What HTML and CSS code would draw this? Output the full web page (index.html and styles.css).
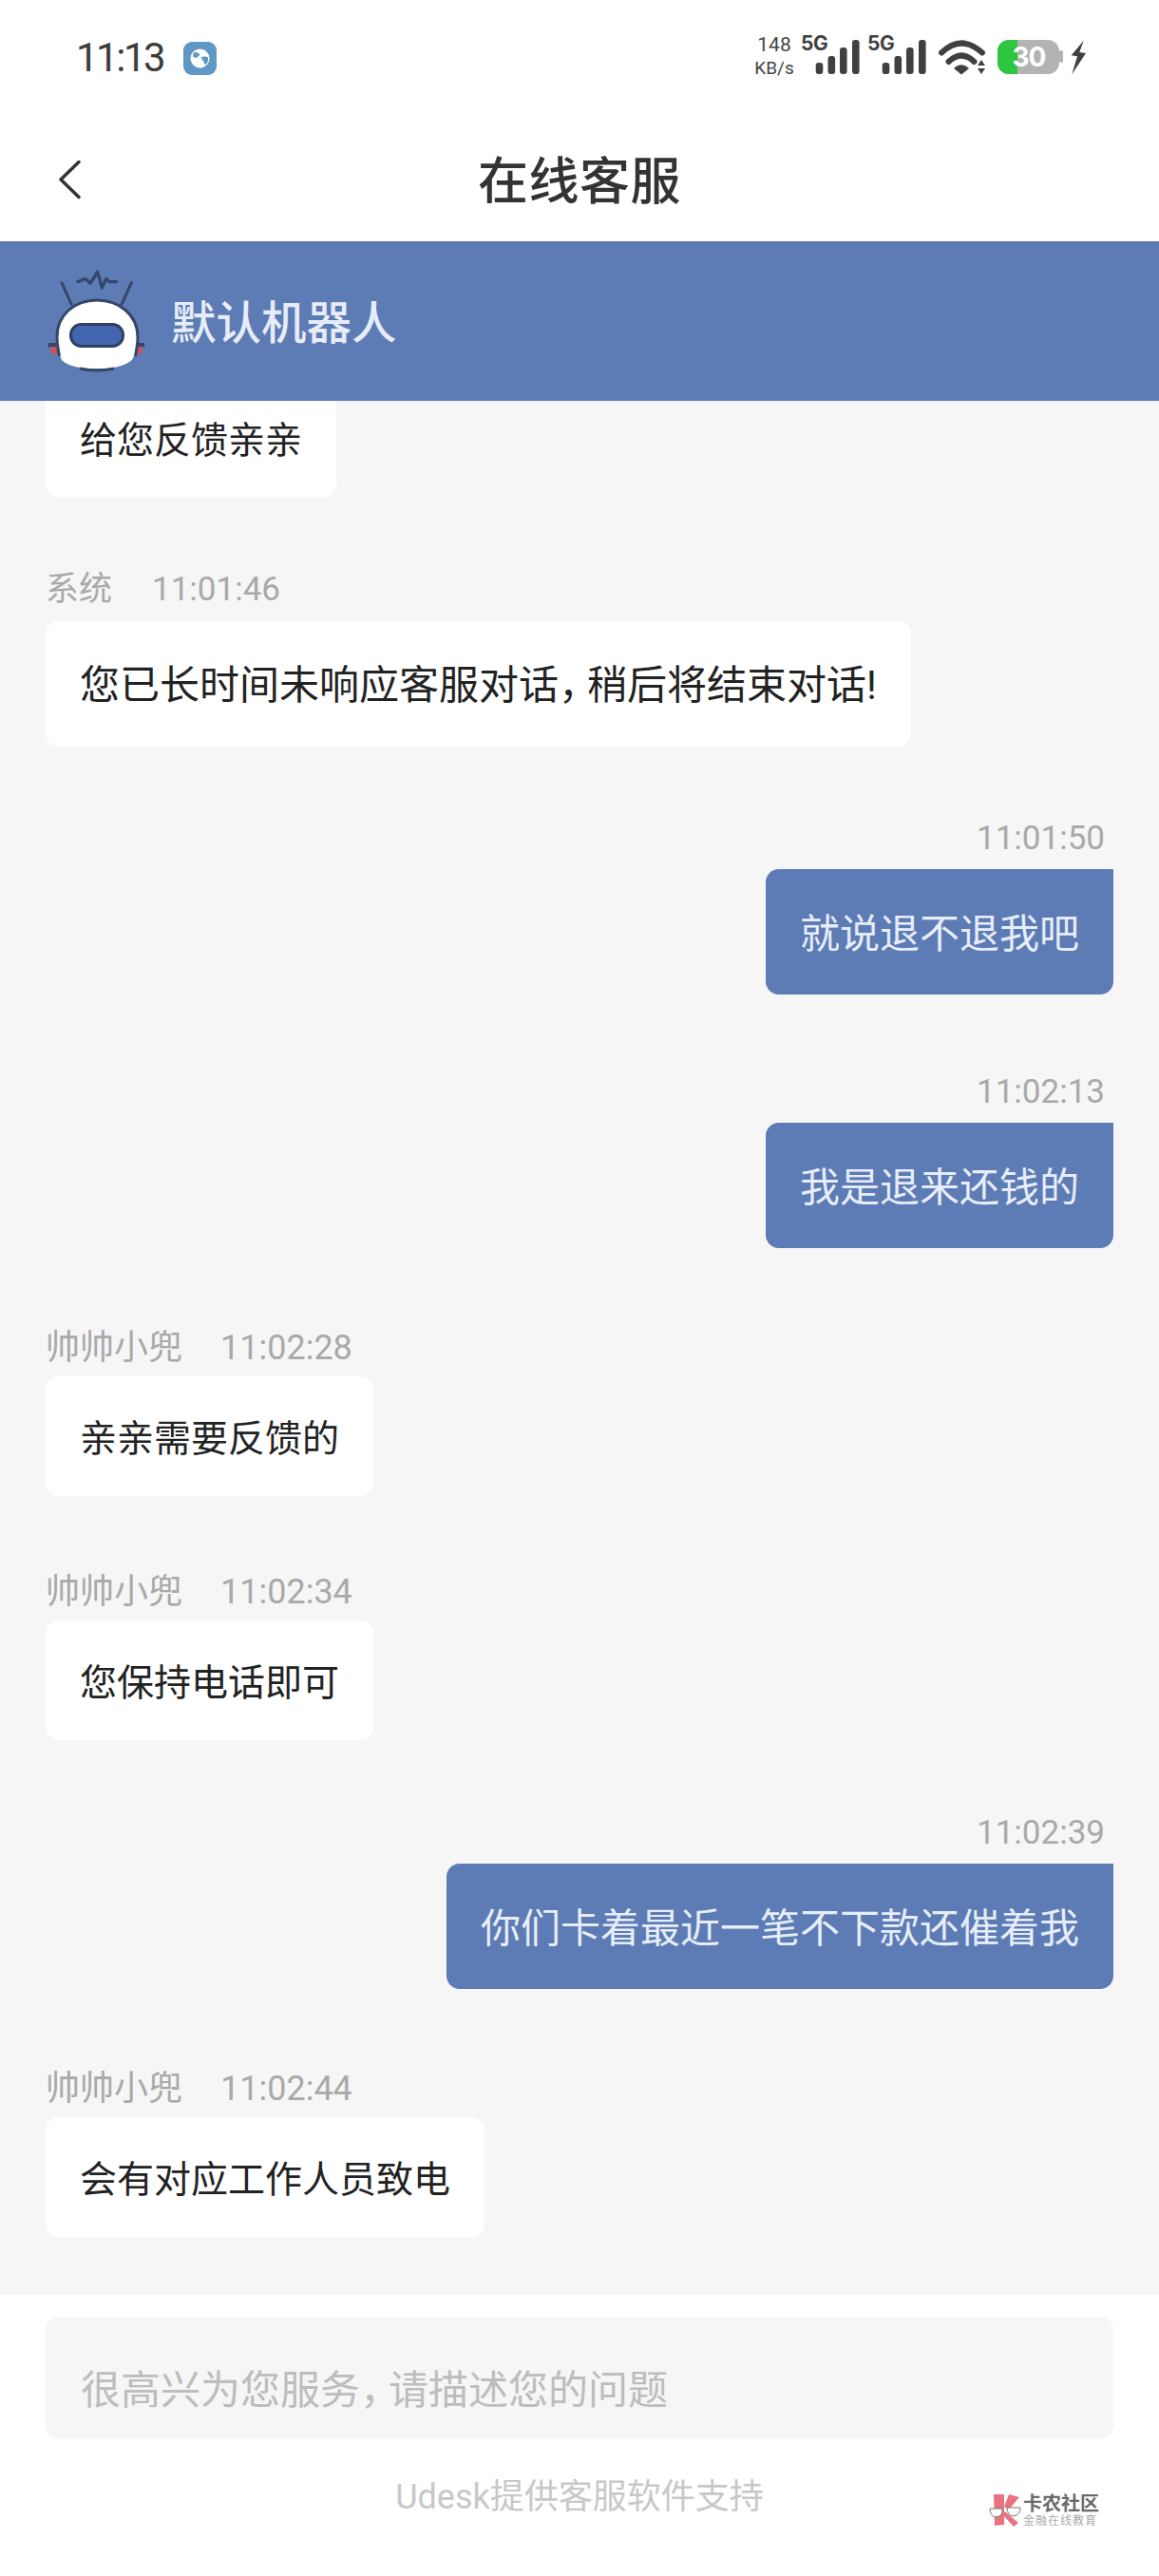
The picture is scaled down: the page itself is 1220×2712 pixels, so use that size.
FILE: index.html
```html
<!DOCTYPE html>
<html lang="zh-CN">
<head>
<meta charset="utf-8">
<title>在线客服</title>
<link rel="stylesheet" href="styles.css">
</head>
<body>
<div class="page">
  <header class="status">
    <div class="status-left">
      <span class="clock">11:13</span>
      <svg class="globe" width="35" height="35" viewBox="0 0 35 35">
        <rect width="35" height="35" rx="9" fill="#6098c4"/>
        <circle cx="17.5" cy="17.5" r="10" fill="#fff"/>
        <path d="M12 10.500c2 1.500 4 .5 5 2.500.5 2-1.500 2-2.500 3.500-1 1-3 0-4.500-1 0-2 .5-3.500 2-5zM19 16c2-1 5-.5 7 .5.500 3-.5 6-3 8-1-1-1-3-2-4.500-1-1-2.500-2.500-2-4z" fill="#6098c4"/>
      </svg>
    </div>
    <div class="status-right">
      <div class="speed"><span class="speed-num">148</span><span class="speed-unit">KB/s</span></div>
      <svg class="sig" width="62" height="50" viewBox="0 -8 62 50">
        <text class="net" x="0" y="15">5G</text>
        <rect x="15.700" y="28" width="7.600" height="12" rx="3"/><rect x="28.500" y="21" width="7.600" height="19" rx="3"/><rect x="41" y="12" width="7.600" height="28" rx="3"/><rect x="54" y="4" width="7.600" height="36" rx="3"/>
      </svg>
      <svg class="sig" width="62" height="50" viewBox="0 -8 62 50">
        <text class="net" x="0" y="15">5G</text>
        <rect x="15.700" y="28" width="7.600" height="12" rx="3"/><rect x="28.500" y="21" width="7.600" height="19" rx="3"/><rect x="41" y="12" width="7.600" height="28" rx="3"/><rect x="54" y="4" width="7.600" height="36" rx="3"/>
      </svg>
      <svg class="wifi" width="49" height="42" viewBox="0 0 49 42">
        <path d="M3 17.500Q24 -2.500 46 17.500M10.500 27Q24 14 37.500 27" fill="none" stroke="#404040" stroke-width="6" stroke-linecap="round"/>
        <path d="M16 34Q24 26.500 32 34L24 40.500Z" fill="#404040"/>
        <path d="M45 25l4 6h-8zM45 40l-4-6h8z" fill="#404040"/>
      </svg>
      <svg class="batt" width="69" height="42" viewBox="0 0 69 42">
        <rect x="0" y="4" width="65" height="36" rx="12" fill="#b3b3b3"/>
        <rect x="65" y="15" width="4" height="13" rx="2" fill="#b3b3b3"/>
        <path d="M12 4H21V40H12A12 12 0 0 1 0 28V16A12 12 0 0 1 12 4Z" fill="#2ec540"/>
        <text class="batt-num" x="33" y="32" text-anchor="middle">30</text>
      </svg>
      <svg class="bolt" width="16" height="42" viewBox="0 0 16 42">
        <path d="M13.700 4.700L.7 20.300 7 21.300 1.300 40.300 16 18 9.300 17Z" fill="#404040"/>
      </svg>
    </div>
  </header>

  <nav class="nav">
    <svg class="back" width="24" height="42" viewBox="0 0 24 42">
      <path d="M22 2.500L3 21l19 18.500" fill="none" stroke="#333" stroke-width="3.500" stroke-linecap="round" stroke-linejoin="round"/>
    </svg>
    <h1 class="title">在线客服</h1>
    <span></span>
  </nav>

  <div class="agent">
    <svg class="robot" width="110" height="110" viewBox="0 0 110 110">
      <path d="M20 14.700L30 37M93.300 14.700L83.300 37" fill="none" stroke="#34476a" stroke-width="3" stroke-linecap="round"/>
      <path d="M36.700 13.700L45 10.300 50 15.300 53.300 10.300 57.700 3 62.300 20 66.700 10.300 70 13.700H77.700" fill="none" stroke="#34476a" stroke-width="3.200" stroke-linecap="round" stroke-linejoin="round"/>
      <path d="M6 78h8v5H6zM107 78h-8v5h8z" fill="#34476a"/>
      <path d="M7 82h8v8H10zM106 82h-8v8h5z" fill="#c9525a"/>
      <path d="M16 72C16 48 34 34 57 34S99 48 99 72C99 82 97 90 94 96 84 104 72 105 57 105S28 104 20 96C17 90 16 82 16 72Z" fill="#fff"/>
      <path d="M17.500 92C16 84 15 78 15 72 15 48 34 33 57 33S100 48 100 72C100 78 99 84 97.500 92" fill="none" stroke="#34476a" stroke-width="3"/>
      <path d="M39 105Q57 109 75 105" fill="none" stroke="#34476a" stroke-width="3"/>
      <rect x="29.500" y="58.500" width="55" height="23" rx="11" fill="#4466b0" stroke="#2e3f60" stroke-width="3"/>
    </svg>
    <span class="agent-name">默认机器人</span>
  </div>

  <main class="chat">
    <section class="msg msg-agent msg-first">
      <p class="bubble bubble-in">给您反馈亲亲</p>
    </section>
    <section class="msg msg-agent">
      <div class="meta"><span class="who">系统</span><time>11:01:46</time></div>
      <p class="bubble bubble-sys">您已长时间未响应客服对话<span class="cm">&#xFF0C;</span>稍后将结束对话!</p>
    </section>
    <section class="msg msg-me gap-s">
      <div class="meta"><time>11:01:50</time></div>
      <p class="bubble bubble-out">就说退不退我吧</p>
    </section>
    <section class="msg msg-me gap-l">
      <div class="meta"><time>11:02:13</time></div>
      <p class="bubble bubble-out">我是退来还钱的</p>
    </section>
    <section class="msg msg-agent gap-l">
      <div class="meta meta-wide"><span class="who">帅帅小兜</span><time>11:02:28</time></div>
      <p class="bubble bubble-in">亲亲需要反馈的</p>
    </section>
    <section class="msg msg-agent gap-m">
      <div class="meta meta-wide"><span class="who">帅帅小兜</span><time>11:02:34</time></div>
      <p class="bubble bubble-in">您保持电话即可</p>
    </section>
    <section class="msg msg-me">
      <div class="meta"><time>11:02:39</time></div>
      <p class="bubble bubble-out">你们卡着最近一笔不下款还催着我</p>
    </section>
    <section class="msg msg-agent gap-l">
      <div class="meta meta-wide"><span class="who">帅帅小兜</span><time>11:02:44</time></div>
      <p class="bubble bubble-in">会有对应工作人员致电</p>
    </section>
  </main>

  <footer class="foot">
    <div class="input">很高兴为您服务<span class="cm">&#xFF0C;</span>请描述您的问题</div>
    <div class="credit">Udesk提供客服软件支持</div>
    <div class="mark">
      <svg width="36" height="38" viewBox="0 0 36 38">
        <path d="M6 2H17V34L7 35ZM22 2L33 5 22 18 17 15ZM18 20L32 32 27 36 15 23Z" fill="#ea7380"/>
        <path d="M2 17H15Q16 25 8.500 26 2 25 2 17ZM20 16H34Q34 24 27 25 20 24 20 16Z" fill="#fff" stroke="#777" stroke-width="1"/>
      </svg>
      <div class="mark-text"><span class="mark-main">卡农社区</span><span class="mark-sub">金融在线教育</span></div>
    </div>
  </footer>
</div>
</body>
</html>
```

FILE: styles.css
```css
* { box-sizing: border-box; }
html, body { margin: 0; padding: 0; }
body {
  width: 1220px;
  height: 2712px;
  overflow: hidden;
  background: #fff;
  font-family: Roboto, "Noto Sans CJK SC", sans-serif;
}
.page { position: relative; display: flex; flex-direction: column; height: 2712px; }

/* status bar */
.status {
  display: flex;
  justify-content: space-between;
  align-items: flex-start;
  height: 90px;
  padding: 38px 77px 0 80px;
}
.status-left { display: flex; align-items: center; height: 46px; gap: 21px; }
.clock { font-size: 42px; line-height: 46px; letter-spacing: -2.500px; color: #3c3c3c; }
.status-right { display: flex; align-items: flex-start; }
.status-right svg { display: block; }
.speed { display: flex; flex-direction: column; align-items: center; width: 42px; margin-right: 7px; color: #444; }
.speed-num { font-size: 21px; line-height: 23px; margin-top: -2px; }
.speed-unit { font-size: 19px; line-height: 22px; margin-top: 2px; }
.sig { fill: #404040; margin: -8px 8px 0 0; }
.sig + .wifi { margin-left: 5px; margin-right: 13px; }
.net { font-size: 21px; font-weight: 700; font-family: Inter, sans-serif; letter-spacing: -.5px; fill: #404040; }
.batt { margin-right: 8px; }
.batt-num { font-size: 28px; font-weight: 700; font-family: Inter, sans-serif; letter-spacing: -1px; fill: #fff; }

/* navigation */
.nav {
  display: grid;
  grid-template-columns: 1fr auto 1fr;
  align-items: center;
  height: 164px;
  padding: 34px 0 0 61px;
}
.title { margin: 0 0 0 -61px; padding-top: 6px; font-size: 53px; line-height: 64px; font-weight: 500; color: #333; letter-spacing: .5px; }

/* agent bar */
.agent {
  display: flex;
  align-items: center;
  height: 168px;
  padding-left: 45px;
  background: #5d7bb4;
}
.agent-name { margin-left: 25px; padding-top: 6px; font-size: 47.500px; line-height: 60px; font-weight: 500; color: #e6edf8; }

/* chat */
.chat {
  flex: 1;
  min-height: 0;
  overflow: hidden;
  padding: 0 48px;
  background: #f6f6f6;
}
.msg { display: flex; flex-direction: column; margin-top: 77px; }
.msg-agent { align-items: flex-start; }
.msg-me { align-items: flex-end; }
.msg-first { margin-top: -24px; }
.gap-s { margin-top: 76px; }
.gap-m { margin-top: 78px; }
.gap-l { margin-top: 82px; }
.meta {
  display: flex;
  gap: 42px;
  height: 40px;
  margin-bottom: 13px;
  font-size: 35px;
  line-height: 40px;
  color: #a9a9a9;
}
.meta-wide { font-size: 36px; padding-top: 3px; gap: 40px; }
.msg-me .meta { padding: 1px 9px 0 0; }
.bubble { margin: 0; padding: 6px 36px 0; white-space: nowrap; }
.bubble-in {
  height: 126px;
  font-size: 39px;
  line-height: 120px;
  color: #222;
  background: #fff;
  border-radius: 14px;
}
.bubble-sys {
  height: 132px;
  padding-top: 3px;
  font-size: 42px;
  line-height: 129px;
  color: #222;
  background: #fff;
  border-radius: 14px;
}
.bubble-out {
  height: 132px;
  font-size: 42px;
  line-height: 126px;
  color: #e6edf8;
  background: #5d7bb4;
  border-radius: 14px 0 14px 14px;
}
.cm { letter-spacing: -12px; }

/* footer */
.foot { position: relative; height: 296px; padding: 23px 48px 0; background: #fff; }
.input {
  height: 129px;
  padding: 48px 37px 0;
  font-size: 42px;
  line-height: 60px;
  color: #bdbdbd;
  background: #f6f6f6;
  border-radius: 14px;
}
.credit {
  margin-top: 36px;
  font-size: 36px;
  line-height: 50px;
  text-align: center;
  color: #c8c8c8;
}
.mark {
  position: absolute;
  left: 1040px;
  top: 208px;
  display: flex;
  align-items: center;
}
.mark svg { display: block; }
.mark-text { display: flex; flex-direction: column; margin-left: 1px; }
.mark-main { font-size: 20px; line-height: 22px; font-weight: 700; color: #6a6a6a; }
.mark-sub { font-size: 12px; line-height: 14px; letter-spacing: 1px; color: #aaa; }
```
